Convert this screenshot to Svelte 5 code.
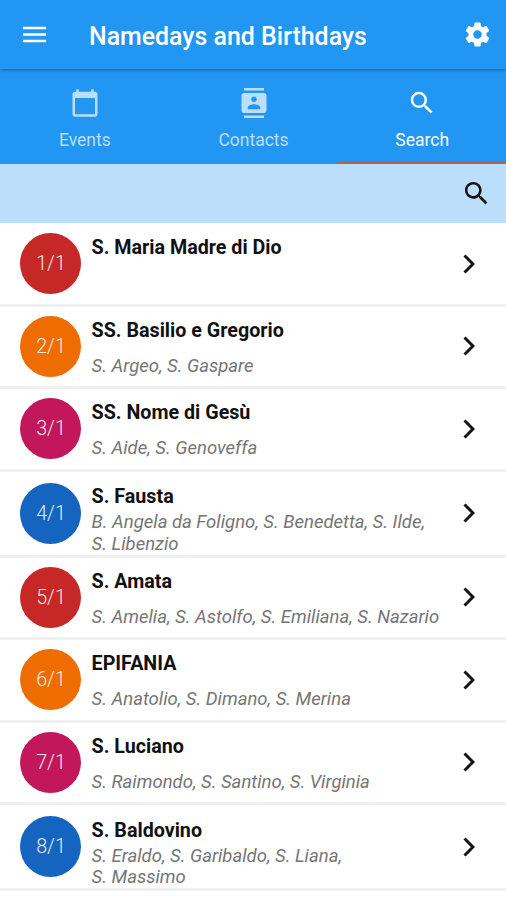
<script lang="ts">
	type Saint = { date: string; name: string; others: string[]; color: string }

	const tabs = [
		{ id: 'events', label: 'Events' },
		{ id: 'contacts', label: 'Contacts' },
		{ id: 'search', label: 'Search' }
	]

	const saints: Saint[] = [
		{ date: '1/1', name: 'S. Maria Madre di Dio', others: [], color: 'red' },
		{ date: '2/1', name: 'SS. Basilio e Gregorio', others: ['S. Argeo, S. Gaspare'], color: 'orange' },
		{ date: '3/1', name: 'SS. Nome di Gesù', others: ['S. Aide, S. Genoveffa'], color: 'pink' },
		{
			date: '4/1',
			name: 'S. Fausta',
			others: ['B. Angela da Foligno, S. Benedetta, S. Ilde,', 'S. Libenzio'],
			color: 'blue'
		},
		{
			date: '5/1',
			name: 'S. Amata',
			others: ['S. Amelia, S. Astolfo, S. Emiliana, S. Nazario'],
			color: 'red'
		},
		{ date: '6/1', name: 'EPIFANIA', others: ['S. Anatolio, S. Dimano, S. Merina'], color: 'orange' },
		{ date: '7/1', name: 'S. Luciano', others: ['S. Raimondo, S. Santino, S. Virginia'], color: 'pink' },
		{
			date: '8/1',
			name: 'S. Baldovino',
			others: ['S. Eraldo, S. Garibaldo, S. Liana,', 'S. Massimo'],
			color: 'blue'
		}
	]

	let active = $state('search')
</script>

{#snippet searchIcon()}
	<svg viewBox="0 0 24 24">
		<path
			d="M15.5 14h-.79l-.28-.27A6.47 6.47 0 0 0 16 9.5 6.5 6.5 0 1 0 9.5 16c1.61 0 3.09-.59 4.23-1.57l.27.28v.79l5 4.99L20.49 19l-4.99-5zm-6 0C7.01 14 5 11.99 5 9.5S7.01 5 9.5 5 14 7.01 14 9.5 11.99 14 9.5 14z"
		/>
	</svg>
{/snippet}

<div class="app">
	<header>
		<button class="icon" aria-label="Menu">
			<svg viewBox="0 0 24 24"><path d="M3 18h18v-2H3v2zm0-5h18v-2H3v2zm0-7v2h18V6H3z" /></svg>
		</button>
		<h1>Namedays and Birthdays</h1>
		<button class="icon settings" aria-label="Settings">
			<svg viewBox="0 0 24 24">
				<path
					d="M19.43 12.98c.04-.32.07-.64.07-.98s-.03-.66-.07-.98l2.11-1.65c.19-.15.24-.42.12-.64l-2-3.46c-.12-.22-.39-.3-.61-.22l-2.49 1c-.52-.4-1.08-.73-1.69-.98l-.38-2.65C14.46 2.18 14.25 2 14 2h-4c-.25 0-.46.18-.49.42l-.38 2.65c-.61.25-1.17.59-1.69.98l-2.49-1c-.23-.09-.49 0-.61.22l-2 3.46c-.13.22-.07.49.12.64l2.11 1.65c-.04.32-.07.65-.07.98s.03.66.07.98l-2.11 1.65c-.19.15-.24.42-.12.64l2 3.46c.12.22.39.3.61.22l2.49-1c.52.4 1.08.73 1.69.98l.38 2.65c.03.24.24.42.49.42h4c.25 0 .46-.18.49-.42l.38-2.65c.61-.25 1.17-.59 1.69-.98l2.49 1c.23.09.49 0 .61-.22l2-3.46c.12-.22.07-.49-.12-.64l-2.11-1.65zM12 15.5c-1.93 0-3.5-1.57-3.5-3.5s1.57-3.5 3.5-3.5 3.5 1.57 3.5 3.5-1.57 3.5-3.5 3.5z"
				/>
			</svg>
		</button>
	</header>

	<nav>
		{#each tabs as tab}
			<button class="tab" class:active={active === tab.id} onclick={() => (active = tab.id)}>
				{#if tab.id === 'events'}
					<svg viewBox="0 0 24 24">
						<path
							d="M20 3h-1V1h-2v2H7V1H5v2H4c-1.1 0-2 .9-2 2v16c0 1.1.9 2 2 2h16c1.1 0 2-.9 2-2V5c0-1.1-.9-2-2-2zm0 18H4V8h16v13z"
						/>
					</svg>
				{:else if tab.id === 'contacts'}
					<svg viewBox="0 0 24 24">
						<path
							d="M20 0H4v2h16V0zM4 24h16v-2H4v2zM20 4H4c-1.1 0-2 .9-2 2v12c0 1.1.9 2 2 2h16c1.1 0 2-.9 2-2V6c0-1.1-.9-2-2-2zm-8 2.75c1.24 0 2.25 1.01 2.25 2.25s-1.01 2.25-2.25 2.25S9.75 10.24 9.75 9 10.76 6.75 12 6.75zM17 17H7v-1.5c0-1.67 3.33-2.5 5-2.5s5 .83 5 2.5V17z"
						/>
					</svg>
				{:else}
					{@render searchIcon()}
				{/if}
				<span>{tab.label}</span>
			</button>
		{/each}
	</nav>

	<div class="search-bar">
		<button class="icon" aria-label="Search">{@render searchIcon()}</button>
	</div>

	<ul>
		{#each saints as saint}
			<li class:tall={saint.others.length > 1}>
				<div class="date {saint.color}">{saint.date}</div>
				<div class="text">
					<h2>{saint.name}</h2>
					<div class="others">
						{#each saint.others as line}
							<p>{line}</p>
						{/each}
					</div>
				</div>
				<svg class="chevron" viewBox="0 0 12 20"><path d="M1.5 1.5 10 10l-8.5 8.5" /></svg>
			</li>
		{/each}
	</ul>
</div>

<style>
	:global(body) {
		margin: 0;
		background: #fff;
	}
	.app {
		height: 900px;
		overflow: hidden;
		background: #fff;
		font-family: Roboto, sans-serif;
	}
	button {
		border: 0;
		padding: 0;
		background: none;
		color: inherit;
		font: inherit;
		cursor: pointer;
	}
	svg {
		display: block;
		fill: currentColor;
	}
	.icon svg {
		width: 31px;
		height: 31px;
	}
	header {
		display: flex;
		align-items: center;
		box-sizing: border-box;
		height: 69px;
		padding: 0 14px 0 19px;
		background: #2196f3;
		color: #fff;
		position: relative;
		box-shadow: 0 1px 3px rgba(0, 0, 0, 0.35);
	}
	h1 {
		flex: 1;
		margin: 4px 0 0 39px;
		font-size: 24.9px;
		font-weight: 500;
		line-height: 30px;
		white-space: nowrap;
	}
	.settings svg {
		width: 29px;
		height: 29px;
	}
	nav {
		display: flex;
		height: 95px;
		background: #2196f3;
		color: #bbdefb;
	}
	.tab {
		flex: 1;
		display: flex;
		flex-direction: column;
		align-items: center;
		box-sizing: border-box;
		padding: 19px 0 0 1px;
		border-bottom: 2px solid transparent;
		font-size: 17.5px;
		line-height: 24px;
	}
	.tab svg {
		width: 30px;
		height: 30px;
	}
	.tab span {
		margin-top: 10px;
	}
	.tab.active {
		border-bottom-color: #b5624a;
		color: #fff;
	}
	.search-bar {
		display: flex;
		align-items: center;
		justify-content: flex-end;
		box-sizing: border-box;
		height: 59px;
		padding-right: 14px;
		background: #bbdefb;
		color: #111;
	}
	ul {
		margin: 0;
		padding: 1px 0 0;
		list-style: none;
	}
	li {
		display: flex;
		align-items: center;
		box-sizing: border-box;
		height: 82.5px;
		padding: 0 31px 0 20px;
		border-bottom: 3px solid #f0f0f0;
	}
	li.tall {
		height: 86px;
	}
	.date {
		flex: none;
		width: 61px;
		height: 61px;
		border-radius: 50%;
		color: rgba(255, 255, 255, 0.9);
		font-size: 19.7px;
		font-weight: 300;
		line-height: 61px;
		text-align: center;
		text-indent: 1px;
	}
	.red {
		background: #c62828;
	}
	.orange {
		background: #ef6c00;
	}
	.pink {
		background: #c2185b;
	}
	.blue {
		background: #1565c0;
	}
	.text {
		flex: 1;
		align-self: stretch;
		display: flex;
		flex-direction: column;
		margin-left: 10.6px;
	}
	h2 {
		margin: 12px 0 0;
		color: #111;
		font-size: 19.7px;
		font-weight: 700;
		line-height: 24px;
	}
	.tall h2 {
		margin-top: 13.5px;
	}
	.others {
		flex: 1;
		display: flex;
		flex-direction: column;
		justify-content: center;
		padding-top: 4px;
	}
	.tall .others {
		padding-top: 3px;
	}
	p {
		margin: 0;
		color: #757575;
		font-size: 18.5px;
		font-style: italic;
		font-weight: 400;
		line-height: 21.5px;
		white-space: nowrap;
	}
	.chevron {
		width: 12px;
		height: 20px;
		fill: none;
		stroke: #111;
		stroke-width: 3;
	}
</style>
